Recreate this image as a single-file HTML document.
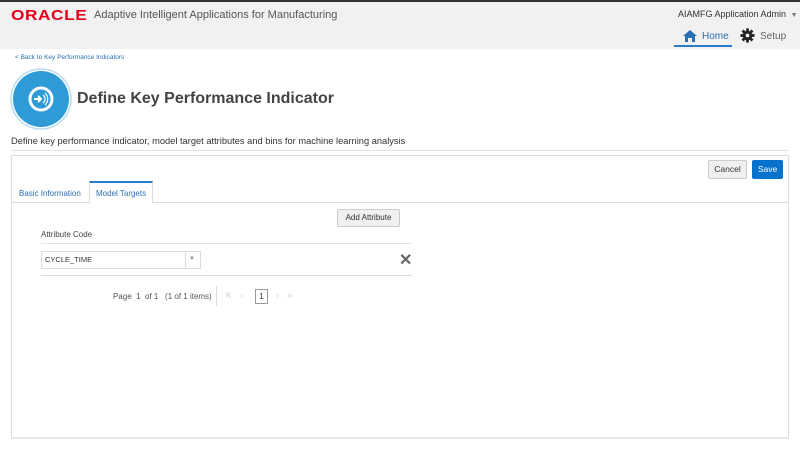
<!DOCTYPE html>
<html><head><style>
*{margin:0;padding:0;box-sizing:border-box}
body{width:800px;height:450px;background:#fff;font-family:"Liberation Sans",sans-serif;position:relative;overflow:hidden;color:#333}
.a{position:absolute;white-space:nowrap}
.hdr{left:0;top:0;width:800px;height:49px;background:#f1f1f1;border-top:2px solid #333}
</style></head><body>
<div class="a hdr"></div>
<div class="a" style="left:11px;top:7px;font-size:15px;font-weight:bold;color:#e3001b;letter-spacing:0.5px;transform:scaleX(1.15);transform-origin:left">ORACLE</div>
<div class="a" style="left:94px;top:9px;font-size:11px;color:#555">Adaptive Intelligent Applications for Manufacturing</div>
<div class="a" style="left:678px;top:9px;font-size:9px;color:#333">AIAMFG Application Admin <span style="font-size:7px;color:#777;margin-left:2px">▼</span></div>
<svg class="a" style="left:682px;top:29px" width="16" height="14" viewBox="0 0 16 14"><path d="M8 1 L15 7 H13 V13 H10 V9 H6 V13 H3 V7 H1 Z" fill="#2a6fb5"/></svg>
<div class="a" style="left:702px;top:31px;font-size:10px;color:#2a6fb5">Home</div>
<div class="a" style="left:674px;top:45px;width:58px;height:2px;background:#2a7cc7"></div>
<svg class="a" style="left:740px;top:28px" width="15" height="15" viewBox="0 0 16 16"><g fill="#222"><circle cx="8" cy="8" r="5"/><rect x="6.5" y="0.5" width="3" height="15"/><rect x="0.5" y="6.5" width="15" height="3"/><rect x="6.5" y="0.5" width="3" height="15" transform="rotate(45 8 8)"/><rect x="6.5" y="0.5" width="3" height="15" transform="rotate(-45 8 8)"/></g><circle cx="8" cy="8" r="2" fill="#f1f1f1"/></svg>
<div class="a" style="left:760px;top:31px;font-size:10px;color:#666">Setup</div>
<div class="a" style="left:15px;top:54px;font-size:6.5px;color:#2a6fb5">&lt; Back to Key Performance Indicators</div>
<svg class="a" style="left:10px;top:68px" width="62" height="62" viewBox="0 0 62 62"><circle cx="31" cy="31" r="30" fill="#fff" stroke="#b8dcf2" stroke-width="1.5"/><circle cx="31" cy="31" r="28" fill="#2e9bd6"/><circle cx="31" cy="31" r="11" fill="none" stroke="#fff" stroke-width="3"/><path d="M24 31h7m-3-3 3 3-3 3" stroke="#fff" stroke-width="2" fill="none"/><path d="M33 27a5 5 0 0 1 0 8M35 25a8 8 0 0 1 0 12" stroke="#fff" stroke-width="1.2" fill="none"/></svg>
<div class="a" style="left:77px;top:90px;font-size:16px;font-weight:bold;color:#444">Define Key Performance Indicator</div>
<div class="a" style="left:11px;top:136px;font-size:9.3px;color:#333">Define key performance indicator, model target attributes and bins for machine learning analysis</div>
<div class="a" style="left:11px;top:150px;width:778px;height:1px;background:#e2e2e2"></div>
<div class="a" style="left:11px;top:155px;width:778px;height:284px;border:1px solid #ddd;border-bottom:2px solid #e8e8e8"></div>
<div class="a" style="left:708px;top:160px;width:39px;height:19px;background:#eef0f1;border:1px solid #ccc;border-radius:2px;font-size:8.5px;color:#333;text-align:center;line-height:17px">Cancel</div>
<div class="a" style="left:752px;top:160px;width:31px;height:19px;background:#0572ce;border-radius:2px;font-size:8.5px;color:#fff;text-align:center;line-height:19px">Save</div>
<div class="a" style="left:12px;top:202px;width:776px;height:1px;background:#ddd"></div>
<div class="a" style="left:19px;top:189px;font-size:8px;color:#2a6fb5">Basic Information</div>
<div class="a" style="left:89px;top:181px;width:64px;height:22px;background:#fff;border:1px solid #ddd;border-top:2px solid #2a7cc7;border-bottom:none"></div>
<div class="a" style="left:96px;top:189px;font-size:8px;color:#2a6fb5">Model Targets</div>
<div class="a" style="left:337px;top:209px;width:63px;height:18px;background:#eef0f1;border:1px solid #ccc;border-radius:2px;font-size:8px;color:#333;text-align:center;line-height:16px">Add Attribute</div>
<div class="a" style="left:41px;top:230px;font-size:8px;color:#444">Attribute Code</div>
<div class="a" style="left:41px;top:243px;width:371px;height:1px;background:#e4e4e4"></div>
<div class="a" style="left:41px;top:251px;width:160px;height:18px;border:1px solid #ddd;font-size:7.5px;color:#333;line-height:16px;padding-left:3px">CYCLE_TIME</div>
<div class="a" style="left:185px;top:252px;width:1px;height:16px;background:#ddd"></div>
<div class="a" style="left:189px;top:256px;font-size:6px;color:#888">▼</div>
<div class="a" style="left:399px;top:250px;font-size:16px;font-weight:bold;color:#666">✕</div>
<div class="a" style="left:41px;top:275px;width:371px;height:1px;background:#ddd"></div>
<div class="a" style="left:113px;top:292px;font-size:8px;color:#555">Page &nbsp;1 &nbsp;of 1 &nbsp;&nbsp;(1 of 1 items)</div>
<div class="a" style="left:216px;top:286px;width:1px;height:20px;background:#ddd"></div>
<div class="a" style="left:226px;top:291px;font-size:8px;color:#ccc;letter-spacing:9px">K‹</div>
<div class="a" style="left:255px;top:289px;width:13px;height:15px;border:1px solid #999;font-size:8px;text-align:center;line-height:13px">1</div>
<div class="a" style="left:276px;top:291px;font-size:8px;color:#ccc;letter-spacing:9px">›»</div>
</body></html>
